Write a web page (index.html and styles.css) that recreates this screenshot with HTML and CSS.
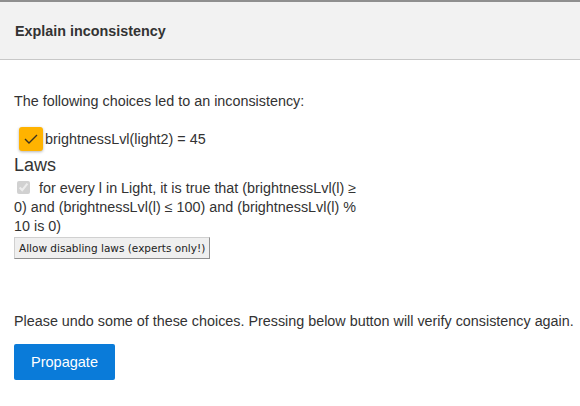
FILE: index.html
```html
<!DOCTYPE html>
<html>
<head>
<meta charset="utf-8">
<link rel="stylesheet" href="styles.css">
</head>
<body>
<div class="modal">
  <div class="header">
    <h2 class="title">Explain inconsistency</h2>
  </div>
  <div class="content">
    <p class="intro">The following choices led to an inconsistency:</p>
    <div class="choice">
      <span class="check-box">
        <svg width="14" height="10" viewBox="0 0 14 10"><path d="M1 5 L5 9 L13 1" fill="none" stroke="#3a3220" stroke-width="1.4"/></svg>
      </span>
      <span class="choice-label">brightnessLvl(light2) = 45</span>
    </div>
    <h3 class="laws-title">Laws</h3>
    <div class="law">
      <input type="checkbox" class="law-check" checked disabled>
      <span>for every l in Light, it is true that (brightnessLvl(l) ≥ 0) and (brightnessLvl(l) ≤ 100) and (brightnessLvl(l) % 10 is 0)</span>
    </div>
    <button class="allow-btn">Allow disabling laws (experts only!)</button>
    <p class="undo">Please undo some of these choices. Pressing below button will verify consistency again.</p>
    <button class="propagate">Propagate</button>
  </div>
</div>
</body>
</html>
```
FILE: styles.css
```css
html, body {
  margin: 0;
  padding: 0;
  background: #fff;
}
body {
  font-family: "Liberation Sans", Arial, sans-serif;
  color: #333;
  font-size: 14.35px;
}
.modal {
  border-top: 2px solid #8f8f8f;
}
.header {
  background: #f2f2f2;
  height: 57px;
  border-bottom: 1px solid #c8c8c8;
  display: flex;
  align-items: center;
  padding: 0 15px;
}
.title {
  margin: 1px 0 0;
  font-size: 14.35px;
  font-weight: bold;
  color: #333;
}
.content {
  padding: 0 4px 0 14px;
}
.intro {
  margin: 31px 0 14px;
  line-height: 20px;
}
.choice {
  display: flex;
  align-items: center;
  gap: 2px;
  margin-left: 5px;
  height: 28px;
}
.check-box {
  width: 24px;
  height: 24px;
  border-radius: 3px;
  background: #ffb300;
  box-shadow: 0 1px 3px rgba(0,0,0,0.3);
  display: flex;
  align-items: center;
  justify-content: center;
}
.laws-title {
  margin: 2px 0 0;
  font-size: 18px;
  font-weight: normal;
  line-height: 20px;
}
.law {
  max-width: 358px;
  line-height: 19px;
  margin-top: 4px;
}
.law-check {
  width: 13px;
  height: 13px;
  margin: 0 5px 0 3px;
  vertical-align: -1px;
}
.allow-btn {
  font-family: "DejaVu Sans", sans-serif;
  font-size: 10.5px;
  color: #222;
  background: #efefef;
  border: 1px solid #8f8f8f;
  border-top-color: #d0d0d0;
  border-left-color: #d0d0d0;
  padding: 4px 4px;
  margin-top: 1px;
  border-radius: 0;
}
.undo {
  margin: 52px 0 13px;
  line-height: 20px;
}
.propagate {
  font-family: "Liberation Sans", Arial, sans-serif;
  font-size: 14.5px;
  color: #fff;
  background: #0a7bd9;
  border: none;
  border-radius: 2px;
  width: 101px;
  height: 36px;
}
```
